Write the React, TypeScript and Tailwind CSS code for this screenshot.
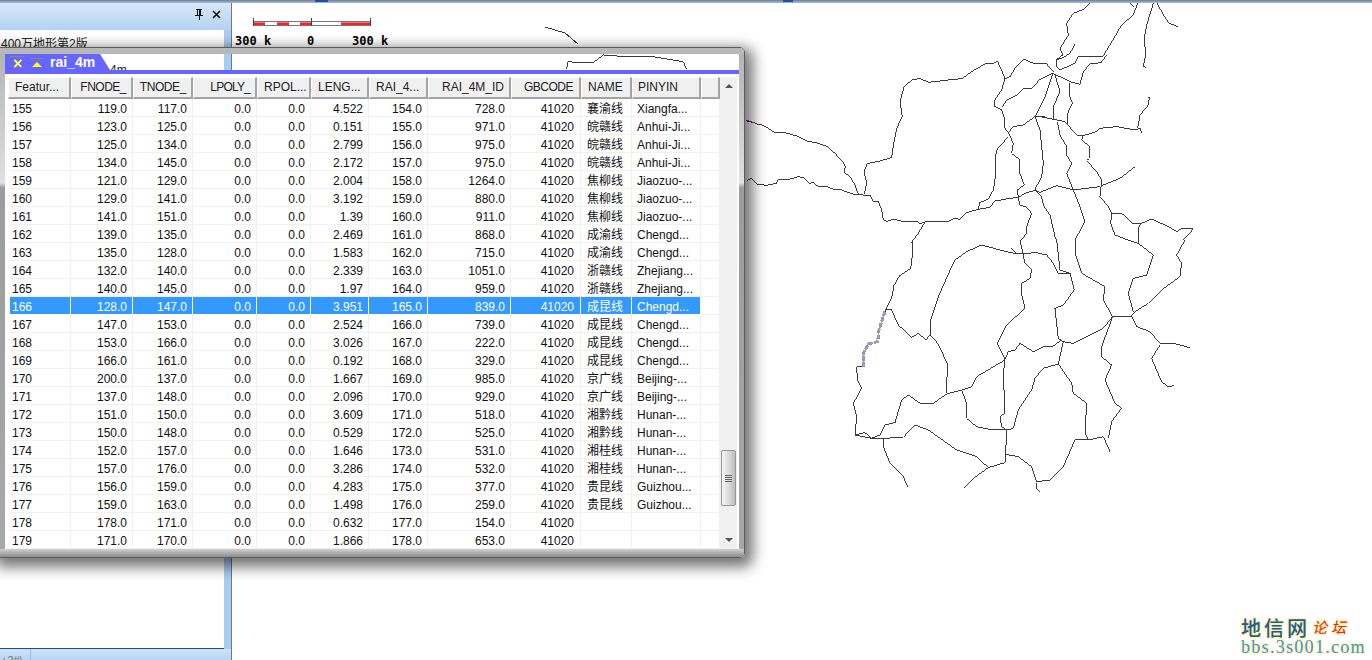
const columns = [
  { label: 'Featur...', width: 'w-[61px] ml-[2px]', align: 'text-left pl-[2px]', head: 'w-[63px] text-left pl-[6px]' },
  { label: 'FNODE_', width: 'w-[62px]', align: 'text-right pr-[5px]', head: 'w-[62px] text-right pr-[5px] tracking-[-0.5px]' },
  { label: 'TNODE_', width: 'w-[60px]', align: 'text-right pr-[5px]', head: 'w-[60px] text-right pr-[5px] tracking-[-0.4px]' },
  { label: 'LPOLY_', width: 'w-[64px]', align: 'text-right pr-[5px]', head: 'w-[64px] text-right pr-[5px] tracking-[-0.8px]' },
  { label: 'RPOL...', width: 'w-[54px]', align: 'text-right pr-[5px]', head: 'w-[54px] text-left pl-[6px]' },
  { label: 'LENG...', width: 'w-[58px]', align: 'text-right pr-[5px]', head: 'w-[58px] text-left pl-[6px]' },
  { label: 'RAI_4...', width: 'w-[59px]', align: 'text-right pr-[5px]', head: 'w-[59px] text-left pl-[6px]' },
  { label: 'RAI_4M_ID', width: 'w-[83px]', align: 'text-right pr-[5px]', head: 'w-[83px] text-right pr-[5px]' },
  { label: 'GBCODE', width: 'w-[70px]', align: 'text-right pr-[6px]', head: 'w-[70px] text-right pr-[6px] tracking-[-0.5px]' },
  { label: 'NAME', width: 'w-[51px]', align: 'text-left pl-[6px]', head: 'w-[51px] text-left pl-[6px]' },
  { label: 'PINYIN', width: 'w-[69px]', align: 'text-left pl-[5px]', head: 'w-[69px] text-left pl-[5px]' },
]

const rows = [
  ['155', '119.0', '117.0', '4.522', '154.0', '728.0', '襄渝线', 'Xiangfa...'],
  ['156', '123.0', '125.0', '0.151', '155.0', '971.0', '皖赣线', 'Anhui-Ji...'],
  ['157', '125.0', '134.0', '2.799', '156.0', '975.0', '皖赣线', 'Anhui-Ji...'],
  ['158', '134.0', '145.0', '2.172', '157.0', '975.0', '皖赣线', 'Anhui-Ji...'],
  ['159', '121.0', '129.0', '2.004', '158.0', '1264.0', '焦柳线', 'Jiaozuo-...'],
  ['160', '129.0', '141.0', '3.192', '159.0', '880.0', '焦柳线', 'Jiaozuo-...'],
  ['161', '141.0', '151.0', '1.39', '160.0', '911.0', '焦柳线', 'Jiaozuo-...'],
  ['162', '139.0', '135.0', '2.469', '161.0', '868.0', '成渝线', 'Chengd...'],
  ['163', '135.0', '128.0', '1.583', '162.0', '715.0', '成渝线', 'Chengd...'],
  ['164', '132.0', '140.0', '2.339', '163.0', '1051.0', '浙赣线', 'Zhejiang...'],
  ['165', '140.0', '145.0', '1.97', '164.0', '959.0', '浙赣线', 'Zhejiang...'],
  ['166', '128.0', '147.0', '3.951', '165.0', '839.0', '成昆线', 'Chengd...'],
  ['167', '147.0', '153.0', '2.524', '166.0', '739.0', '成昆线', 'Chengd...'],
  ['168', '153.0', '166.0', '3.026', '167.0', '222.0', '成昆线', 'Chengd...'],
  ['169', '166.0', '161.0', '0.192', '168.0', '329.0', '成昆线', 'Chengd...'],
  ['170', '200.0', '137.0', '1.667', '169.0', '985.0', '京广线', 'Beijing-...'],
  ['171', '137.0', '148.0', '2.096', '170.0', '929.0', '京广线', 'Beijing-...'],
  ['172', '151.0', '150.0', '3.609', '171.0', '518.0', '湘黔线', 'Hunan-...'],
  ['173', '150.0', '148.0', '0.529', '172.0', '525.0', '湘黔线', 'Hunan-...'],
  ['174', '152.0', '157.0', '1.646', '173.0', '531.0', '湘桂线', 'Hunan-...'],
  ['175', '157.0', '176.0', '3.286', '174.0', '532.0', '湘桂线', 'Hunan-...'],
  ['176', '156.0', '159.0', '4.283', '175.0', '377.0', '贵昆线', 'Guizhou...'],
  ['177', '159.0', '163.0', '1.498', '176.0', '259.0', '贵昆线', 'Guizhou...'],
  ['178', '178.0', '171.0', '0.632', '177.0', '154.0', '', ''],
  ['179', '171.0', '170.0', '1.866', '178.0', '653.0', '', ''],
]

// railway lines, traced in three tiles of the map (coords are 3x, see transforms below)
const tileA = [
  '18,360 25,365 40,367 50,372 65,375 85,385 103,397 135,398 170,408 200,423 235,430 262,440 285,460 310,488 316,500 312,517 330,530 345,555 355,583',
  '20,542 33,535 50,552 80,556 110,550 115,538 155,537 175,530 190,533 208,550 220,548 235,560 260,560 280,568 305,570 325,578 345,584 390,586 400,605 415,603 425,630 430,658 440,664 462,658 490,665 530,664 540,672 555,666 620,666 645,655 660,658 680,638 715,628 750,622 765,603 800,597 835,592 860,578 885,572 900,577',
  '373,583 380,550 372,515 382,491 420,483 455,473 462,425 470,385 487,350 480,305 492,262 515,240 540,235 565,247 625,240 665,236 700,212 735,192 760,190 772,183 785,210 795,237 810,230 825,205 852,178 880,190 920,192 940,215',
  '795,237 785,270 765,300 765,320 785,330 795,360 795,385 805,398 820,380 850,375 885,350 915,350',
  '940,218 900,238 875,265 850,267 830,285 800,300 788,320',
  '805,398 820,430 815,460 840,480 838,515 853,555 832,570 835,592 840,615 860,622 875,640 860,680 860,700 840,725',
  '805,410 770,450 765,480 768,520 760,570 745,598 720,607 715,628',
  '885,350 900,390 905,440 910,490 905,530 885,568 905,590 910,615 930,645 945,710 950,720',
  '940,218 915,290 885,350',
  '555,666 535,700 512,730',
]

const tileB = [
  '150,10 130,28 100,40 80,70 85,105 60,145 68,165 48,180 50,200 60,210',
  '105,133 90,160 70,173 48,180',
  '60,210 105,190 115,170 190,168 245,75 280,45 293,10',
  '35,218 90,245 120,253 130,215 150,192 183,188 200,165',
  '45,225 60,275 40,320 42,358',
  '88,250 90,290 97,310 83,340 82,372',
  '0,350 40,358 75,365 110,405 130,407 170,395 180,385 230,380 285,390 300,385 305,400',
  '293,385 300,345 325,315 328,292 323,292',
  '130,407 125,420 150,440 148,475 140,482 170,515 185,540 180,590 205,620 215,640 212,670 225,705 250,715 295,730',
  '213,640 245,640 280,672 300,672 335,657 385,680 410,695 425,685 460,687 430,720',
  '295,730 297,680 310,665',
  '183,558 240,535 285,500',
  '0,577 50,557 100,570 180,560',
  '52,365 60,405 80,440 80,465 95,490 80,520 100,570 120,620 135,665 105,720',
  '270,10 280,20',
  '340,10 320,75 312,120 318,160 310,200 317,202',
  '352,10 370,45 387,70 415,80',
]

const tileC = [
  '218,0 218,40 212,85 178,108 160,140 158,165 135,215',
  '72,380 50,380 52,420 65,445 40,490 50,530 45,585 75,578 95,595 120,585 135,555 165,548 185,480 205,465 240,490 280,490 320,462 365,450 395,440 410,410 495,360',
  '135,210 155,210 175,255 215,292 235,280 258,300 270,285 295,312 312,350 322,370 320,460',
  '270,285 272,240 295,170 335,80 345,60 380,35 425,15 480,30 530,42 590,38 620,45 640,70 655,100 690,100 703,150 670,195 645,205 655,295 670,305 700,310 740,290 790,265 818,230 875,228 885,215 925,190 965,150 1020,110 1025,70 1010,45 1035,0',
  '540,0 555,70 575,90 570,115 545,130 545,165 555,205 500,255 472,310 495,358 490,400 495,520 480,530 485,560 500,570 520,565 535,510 575,450 585,415 610,385 655,372 670,305',
  '495,358 505,335 525,330 540,310 580,335 610,320 640,318 665,300',
  '655,372 695,430 700,460 740,490 735,580 745,600 790,590 810,635',
  '365,450 380,490 380,535 410,560 450,568 500,570 497,640 495,668 445,683 400,715 370,745',
  '497,643 535,650 575,680 590,725 630,720 670,680 705,600 745,600',
  '590,728 590,745 602,757',
  '45,585 95,595 130,595 190,592 225,555 265,570 350,630 410,650 445,683',
  '130,595 130,620 150,670 190,710 203,740',
  '650,0 660,90 690,100',
  '708,0 705,40 725,100 795,140 790,180 818,230 785,320 785,350 815,375 795,420 825,490 845,505 815,545 805,595',
  '865,0 895,10 940,45 920,105 880,115 865,160 880,215',
  '875,228 890,260 930,275 960,310 1000,310 1050,323',
  '960,315 935,355 965,425 985,440 1003,437',
  '513,25 530,42',
]

const glassLines = '500,88 503,65 540,68 580,68 610,45 680,50 760,50 850,65 860,88'
const selected = '135,215 125,245 117,270 113,305 85,312 70,340 72,380'

function Lines({ points, x, y }: { points: string[]; x: number; y: number }) {
  return (
    <g transform={`translate(${x} ${y}) scale(0.3333)`} fill="none" stroke="#3a3a3a" strokeWidth="3">
      {points.map((p) => (
        <polyline key={p} points={p} />
      ))}
    </g>
  )
}

function RailwayMap() {
  return (
    <svg className="absolute inset-0 h-[657px] w-[1140px]" viewBox="232 3 1140 657" shapeRendering="crispEdges">
      <Lines points={tileA} x={740} y={0} />
      <Lines points={tileB} x={1040} y={0} />
      <Lines points={tileC} x={840} y={240} />
      <Lines points={[glassLines]} x={400} y={40} />
      <polyline points="545,27 565,33 578,44" fill="none" stroke="#3a3a3a" />
      <g transform="translate(840 240) scale(0.3333)" fill="none">
        <polyline points={selected} stroke="#8a8aff" strokeWidth="9" strokeDasharray="14 4" />
        <polyline points={selected} stroke="#b5ad3a" strokeWidth="4" strokeDasharray="16 6" />
      </g>
      <polyline points="746,120 752,122 755,123" fill="none" stroke="#a020c0" />
    </svg>
  )
}

function ScaleBar() {
  const labels = 'absolute top-[30px] text-[12px] leading-4 font-bold text-black font-["DejaVu_Sans_Mono",monospace]'
  const red = 'bg-[linear-gradient(#ff9a9a,#f5222a_45%,#f5222a)]'
  return (
    <>
      <div className="absolute left-[21px] top-[15px] flex h-[8px] w-[118px] items-end border-x border-[#444]">
        <div className="flex h-[5px] w-full border-y border-[#777]">
          <div className={`w-[11px] ${red}`} />
          <div className="w-[12px] bg-white" />
          <div className={`w-[12px] ${red}`} />
          <div className="w-[11px] bg-white" />
          <div className={`w-[12px] ${red}`} />
          <div className="w-[29px] bg-white" />
          <div className={`flex-1 ${red}`} />
        </div>
        <div className="absolute top-0 left-[57px] h-[8px] w-[1px] bg-[#444]" />
      </div>
      <span className={`${labels} left-[3px]`}>300 k</span>
      <span className={`${labels} left-[75px]`}>0</span>
      <span className={`${labels} left-[120px]`}>300 k</span>
    </>
  )
}

function Watermark() {
  return (
    <div className="absolute bottom-[5px] left-[1009px] flex w-[130px] flex-col font-['Liberation_Serif','Noto_Sans_CJK_SC',serif] [text-shadow:0_0_2px_#ffe95a,0_0_3px_#ffe95a]">
      <div className="flex h-[21px] items-center">
        <span className="text-[20px] leading-none font-medium tracking-[3px] text-[#1c5aa6]">地信网</span>
        <span className="ml-[2px] text-[15px] leading-none font-normal tracking-[4px] text-[#e5231f] italic">论坛</span>
      </div>
      <span className="text-[18px] leading-[16px] tracking-[1.3px] text-[#3f93ea]">bbs.3s001.com</span>
    </div>
  )
}

function Sidebar() {
  return (
    <div className="flex w-[232px] shrink-0 flex-col border-r border-[#777] bg-[#a8cdf2]">
      <div className="flex h-[27px] items-center justify-end gap-[8px] bg-[linear-gradient(#d8e8f8,#b2d2f2)] pr-[10px] pb-[5px]">
        <svg width="10" height="11" viewBox="0 0 10 11" shapeRendering="crispEdges">
          <path d="M2 0h6v1H7v5h2v1H5.500v4h-1V7H1V6h2V1H2zM4 1v5h2V1z" fill="#111" />
          <path d="M5 1h1v5H5z" fill="#111" />
        </svg>
        <svg width="9" height="9" viewBox="0 0 9 9">
          <path d="M1 1l7 7M8 1l-7 7" stroke="#111" strokeWidth="1.700" />
        </svg>
      </div>
      <div className="mr-[7px] flex flex-1 flex-col border-b border-[#17508e] bg-white text-[12px] leading-4 text-[#222]">
        <span className="mt-[6px] pl-[1px]">400万地形第2版</span>
        <span className="mt-[10px] pl-[110px]">4m</span>
      </div>
      <div className="flex h-[11px] overflow-hidden bg-[linear-gradient(#cfe3f8,#b7d5f4)]">
        <span className="w-[31px] border-r border-[#9bbcdc] pt-[3px] pl-[1px] text-[11px] leading-4 text-[#777]">+2#\</span>
      </div>
    </div>
  )
}

function Scrollbar() {
  return (
    <div className="flex w-[17px] shrink-0 flex-col bg-[#f0f0f0]">
      <div className="flex h-[18px] items-center justify-center">
        <div className="h-0 w-0 border-x-[4px] border-b-[4px] border-x-transparent border-b-[#555]" />
      </div>
      <div className="flex flex-1 flex-col justify-end pb-[25px]">
        <div className="mx-[1px] flex h-[56px] flex-col items-center justify-center gap-[1px] rounded-[2px] border border-[#979797] bg-[linear-gradient(90deg,#f6f6f6,#dcdcdc_50%,#bdbdbd)]">
          <div className="h-[1px] w-[7px] bg-[#666]" />
          <div className="h-[1px] w-[7px] bg-[#666]" />
          <div className="h-[1px] w-[7px] bg-[#666]" />
          <div className="h-[1px] w-[7px] bg-[#666]" />
        </div>
      </div>
      <div className="flex h-[18px] items-center justify-center">
        <div className="h-0 w-0 border-x-[4px] border-t-[4px] border-x-transparent border-t-[#555]" />
      </div>
    </div>
  )
}

function AttributeTable() {
  return (
    <div className="flex flex-1 bg-white pt-[3px] pr-[2px] pl-[3px] text-[12px] leading-none text-[#111] font-['Liberation_Sans','Noto_Sans_CJK_SC',sans-serif]">
      <div className="w-[712px] shrink-0">
        <div className="flex h-[22px]">
          {columns.map((c) => (
            <div
              key={c.label}
              className={`${c.head} shrink-0 border-t border-r-2 border-b-2 border-l border-t-white border-r-[#a4a4a4] border-b-[#a4a4a4] border-l-white bg-[#f0f0f0] leading-[18px] text-[#222]`}
            >
              {c.label}
            </div>
          ))}
          <div className="flex-1 border-t border-r-2 border-b-2 border-l border-t-white border-r-[#a4a4a4] border-b-[#a4a4a4] border-l-white bg-[#f0f0f0]" />
        </div>
        {rows.map((row) => {
          const active = row[0] === '166'
          const cells = [row[0], row[1], row[2], '0.0', '0.0', row[3], row[4], row[5], '41020', row[6], row[7]]
          return (
            <div key={row[0]} className="flex h-[18px]">
              {columns.map((c, i) => (
                <div
                  key={c.label}
                  className={`${c.width} ${c.align} shrink-0 truncate border-r border-b leading-[21px] ${
                    active ? 'border-white bg-[#3399ff] text-white' : 'border-[#f0f0f0]'
                  }`}
                >
                  {cells[i]}
                </div>
              ))}
              <div className="flex-1 border-r border-b border-[#f0f0f0]" />
            </div>
          )
        })}
      </div>
      <Scrollbar />
    </div>
  )
}

function FloatingWindow() {
  const sideFrame = 'bg-[linear-gradient(#b4b4b4,#dedede_25%,#e4e4e4_26%,#9c9c9c_27%,#a8a8a8_100%)]'
  return (
    <div className="absolute top-[47px] left-[-4px] flex h-[511px] w-[749px] flex-col overflow-hidden rounded-r-[5px] border border-[#5c5c5c] shadow-[4px_5px_14px_4px_rgba(0,0,0,0.55)]">
      <div className="h-[6px] shrink-0 bg-[#b8b8b8]" />
      <div className="flex flex-1">
        <div className={`w-[8px] shrink-0 ${sideFrame}`} />
        <div className="flex flex-1 flex-col">
          <div className="h-[16px] w-[105px] bg-[#6666ff] [clip-path:polygon(0_0,95px_0,105px_16px,0_16px)]">
            <div className="flex h-full items-center pl-[5px]">
              <div className="flex w-[20px] flex-col items-start gap-[1px]">
                <div className="h-[1px] w-[14px] bg-[#8a8a7a]" />
                <span className="pl-[3px] text-[16px] leading-[11px] font-bold text-[#ffff33] font-['Liberation_Sans',sans-serif]">×</span>
              </div>
              <div className="flex w-[20px] flex-col items-start gap-[3px]">
                <div className="h-[1px] w-[14px] bg-[#8a8a7a]" />
                <div className="ml-[2px] h-0 w-0 border-x-[5px] border-b-[5px] border-x-transparent border-b-[#ffff00]" />
              </div>
              <span className="text-[14px] leading-4 font-bold text-white font-['Liberation_Sans',sans-serif]">rai_4m</span>
            </div>
          </div>
          <div className="h-[4px] bg-[#6666ff]" />
          <AttributeTable />
        </div>
        <div className={`w-[5px] shrink-0 ${sideFrame}`} />
      </div>
      <div className="h-[8px] shrink-0 bg-[linear-gradient(#d0d0d0,#8c8c8c)]" />
    </div>
  )
}

export default function App() {
  return (
    <div className="relative flex h-[660px] w-[1372px] flex-col overflow-hidden bg-white font-['Liberation_Sans','Noto_Sans_CJK_SC',sans-serif]">
      <div className="relative h-[3px] shrink-0 bg-[linear-gradient(#6b7f99,#a8bfdc)]">
        <div className="absolute top-0 left-[315px] h-[2px] w-[13px] bg-[#1d4fb0]" />
        <div className="absolute top-0 left-[783px] h-[2px] w-[10px] bg-[#1d4fb0]" />
      </div>
      <div className="flex flex-1">
        <Sidebar />
        <div className="relative flex-1 bg-white">
          <RailwayMap />
          <ScaleBar />
          <Watermark />
        </div>
      </div>
      <FloatingWindow />
    </div>
  )
}
